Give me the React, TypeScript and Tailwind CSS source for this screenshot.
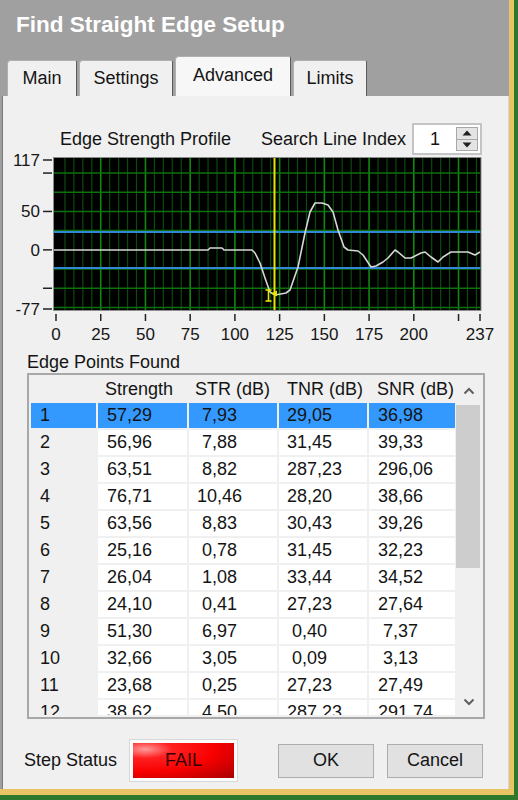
import React from 'react';

type Row = [string, string, string, string, string];

const rows: Row[] = [
  ['1', '57,29', '7,93', '29,05', '36,98'],
  ['2', '56,96', '7,88', '31,45', '39,33'],
  ['3', '63,51', '8,82', '287,23', '296,06'],
  ['4', '76,71', '10,46', '28,20', '38,66'],
  ['5', '63,56', '8,83', '30,43', '39,26'],
  ['6', '25,16', '0,78', '31,45', '32,23'],
  ['7', '26,04', '1,08', '33,44', '34,52'],
  ['8', '24,10', '0,41', '27,23', '27,64'],
  ['9', '51,30', '6,97', '0,40', '7,37'],
  ['10', '32,66', '3,05', '0,09', '3,13'],
  ['11', '23,68', '0,25', '27,23', '27,49'],
  ['12', '38,62', '4,50', '287,23', '291,74'],
];

// single digit values get a leading space, like the fixed width format of the original
const pad = (v: string) => (v.indexOf(',') === 1 ? ' ' + v : v);

const X = (v: number) => 56 + v * (424 / 237);
const Y = (v: number) => 160 + (117 - v) * (149 / 194);

const curve = [
  [54, 250], [208, 250], [210, 248], [222, 248], [224, 250], [252, 250], [255, 253], [260, 263],
  [265, 278], [270, 292], [275, 295], [286, 293], [290, 290], [298, 267], [305, 233], [310, 212],
  [315, 203], [322, 203], [328, 205], [333, 212], [338, 230], [344, 247], [348, 250], [358, 251],
  [363, 255], [371, 267], [376, 266], [383, 262], [388, 258], [395, 250], [398, 252], [405, 258],
  [411, 258], [421, 253], [425, 252], [431, 257], [438, 262], [443, 257], [451, 252], [468, 252],
  [475, 255], [480, 252],
];

const xTicks = [0, 25, 50, 75, 100, 125, 150, 175, 200, 225, 237];
const yTicks: [number, string][] = [
  [117, '117'],
  [100, ''],
  [50, '50'],
  [0, '0'],
  [-50, ''],
  [-77, '-77'],
];

const Chart = () => {
  const vLines: number[] = [];
  for (let v = 5; v < 237; v += 5) vLines.push(v);
  const hLines = [100, 75, 50, 25, -25, -50, -75];

  return (
    <svg width={506} height={196} viewBox="3 149 506 196" className="-mt-[6px] block shrink-0">
      <rect x={53.5} y={157.5} width={427.5} height={153} fill="#000" stroke="#8c8c8c" />
      {vLines.map((v) => (
        <line
          key={'v' + v}
          x1={X(v)}
          x2={X(v)}
          y1={158}
          y2={310}
          stroke={v % 25 === 0 ? '#0f8a0f' : '#0a4c0a'}
          strokeWidth={v % 25 === 0 ? 1.6 : 1.2}
        />
      ))}
      {hLines.map((v) => (
        <line
          key={'h' + v}
          x1={54}
          x2={480.5}
          y1={Y(v)}
          y2={Y(v)}
          stroke="#0c700c"
          strokeWidth={1.6}
        />
      ))}
      <line x1={54} x2={480.5} y1={232} y2={232} stroke="#3286d6" strokeWidth={2} />
      <line x1={54} x2={480.5} y1={268} y2={268} stroke="#3286d6" strokeWidth={2} />
      <polyline
        points={curve.map((p) => p.join(',')).join(' ')}
        fill="none"
        stroke="#d6d6d6"
        strokeWidth={1.6}
        strokeLinejoin="round"
      />
      <line x1={274.5} x2={274.5} y1={158} y2={310} stroke="#e6e600" strokeWidth={2} />
      <g stroke="#e6e600" strokeWidth={1.6} fill="none">
        <line x1={265.5} x2={271.5} y1={290} y2={290} />
        <line x1={268.5} x2={268.5} y1={290} y2={301} />
        <line x1={265.5} x2={271.5} y1={301} y2={301} />
      </g>
      <polygon points="271,293.5 277,290.5 277,296.5" fill="#e6e600" />

      {yTicks.map(([v, label]) => (
        <g key={'yt' + v}>
          <line x1={43} x2={52} y1={Y(v)} y2={Y(v)} stroke="#222" strokeWidth={1.5} />
          {label && (
            <text
              x={40}
              y={Y(v) + 6}
              textAnchor="end"
              fontSize={17}
              fontFamily="'Liberation Sans', Arial, sans-serif"
              fill="#161616"
            >
              {label}
            </text>
          )}
        </g>
      ))}
      {xTicks.map((v) => (
        <g key={'xt' + v}>
          <line x1={X(v)} x2={X(v)} y1={314} y2={321} stroke="#222" strokeWidth={1.5} />
          {v !== 225 && (
            <text
              x={X(v)}
              y={339.5}
              textAnchor="middle"
              fontSize={17}
              fontFamily="'Liberation Sans', Arial, sans-serif"
              fill="#161616"
            >
              {v}
            </text>
          )}
        </g>
      ))}
    </svg>
  );
};

const Tab = ({ label, active = false, w }: { label: string; active?: boolean; w: string }) => (
  <div
    className={`flex items-center justify-center rounded-tl-[4px] rounded-tr-[2px] border border-b-0 border-[#b0b0b0] border-r-[#5c5c5c] ${w} ${
      active ? 'h-[40px] bg-[#f7f7f7] pb-[2px]' : 'h-[36px] bg-[#f0f0f0]'
    }`}
  >
    {label}
  </div>
);

const Scrollbar = () => (
  <div className="flex h-full w-[25px] flex-col bg-[#f0f0f0]">
    <div className="flex h-[28px] items-center justify-center">
      <svg width={12} height={8} viewBox="0 0 12 8">
        <polyline points="1.5,6.5 6,2 10.5,6.5" fill="none" stroke="#606060" strokeWidth={2} />
      </svg>
    </div>
    <div className="h-[163px] w-[24px] bg-[#cdcdcd]" />
    <div className="flex-1" />
    <div className="flex h-[26px] items-center justify-center">
      <svg width={12} height={8} viewBox="0 0 12 8">
        <polyline points="1.5,1.5 6,6 10.5,1.5" fill="none" stroke="#606060" strokeWidth={2} />
      </svg>
    </div>
  </div>
);

const EdgeTable = () => (
  <div className="ml-[24px] flex h-[346px] w-[458px] shrink-0 gap-[1px] overflow-hidden border-2 border-[#a8a8a8] bg-[#f0f0f0] p-[2px]">
    <div className="flex w-[424px] flex-col gap-[2px] overflow-hidden">
      <div className="flex h-[24px] shrink-0 items-center gap-[2px]">
        <div className="w-[65px]" />
        <div className="w-[89px] pl-[7px]">Strength</div>
        <div className="w-[88px] pl-[6px]">STR (dB)</div>
        <div className="w-[88px] pl-[8px]">TNR (dB)</div>
        <div className="w-[86px] pl-[8px]">SNR (dB)</div>
      </div>
      {rows.map((r, i) => {
        const sel = i === 0;
        const cell = sel ? 'bg-[#3399ff]' : 'bg-white';
        return (
          <div key={r[0]} className="flex h-[25px] shrink-0 gap-[2px] whitespace-pre leading-[25px]">
            <div className={`w-[65px] pl-[9px] ${sel ? 'bg-[#3399ff]' : ''}`}>{r[0]}</div>
            <div className={`w-[89px] pl-[9px] ${cell}`}>{r[1]}</div>
            <div className={`w-[88px] pl-[8px] ${cell}`}>{pad(r[2])}</div>
            <div className={`w-[88px] pl-[8px] ${cell}`}>{pad(r[3])}</div>
            <div className={`w-[86px] pl-[9px] ${cell}`}>{pad(r[4])}</div>
          </div>
        );
      })}
    </div>
    <Scrollbar />
  </div>
);

const NumericBox = () => (
  <div className="flex h-[32px] w-[70px] items-center border-2 border-[#c4c4c4] bg-white">
    <span className="ml-[16px] w-[26px]">1</span>
    <div className="flex h-[24px] w-[22px] flex-col border border-[#a8a8a8]">
      <div className="flex flex-1 items-center justify-center border-b border-[#a8a8a8] bg-[#e4e4e4]">
        <svg width={10} height={6} viewBox="0 0 10 6">
          <polygon points="5,0.5 9.5,5.5 0.5,5.5" fill="#202020" />
        </svg>
      </div>
      <div className="flex flex-1 items-center justify-center bg-[#e4e4e4]">
        <svg width={10} height={6} viewBox="0 0 10 6">
          <polygon points="0.5,0.5 9.5,0.5 5,5.5" fill="#202020" />
        </svg>
      </div>
    </div>
  </div>
);

export default function App() {
  return (
    <div className="h-[800px] w-[518px] bg-[#2c782c] font-['Liberation_Sans',Arial,sans-serif] text-[18px] text-[#141414]">
      <div className="h-[795px] w-[514px] bg-[#e9c466]">
        <div className="flex h-[789px] w-[509px] flex-col bg-[#a0a0a0] pl-[2px]">
          {/* Title */}
          <div className="h-[56px] shrink-0 pl-[14px] pt-[14px] text-[22.5px] font-bold leading-[22px] text-white">
            Find Straight Edge Setup
          </div>

          {/* Tabs */}
          <div className="flex h-[40px] shrink-0 items-end gap-[2px] pl-[5px]">
            <Tab label="Main" w="w-[70px]" />
            <Tab label="Settings" w="w-[94px]" />
            <Tab label="Advanced" w="w-[116px]" active />
            <Tab label="Limits" w="w-[74px]" />
          </div>

          {/* Panel */}
          <div className="flex flex-1 flex-col border-l border-r border-l-[#7a7a7a] border-r-[#d6d6d6] bg-[#f0f0f0]">
            <div className="mt-[27px] flex h-[32px] shrink-0 items-center">
              <span className="ml-[57px] w-[201px]">Edge Strength Profile</span>
              <span className="w-[151px]">Search Line Index</span>
              <NumericBox />
            </div>

            <Chart />

            <div className="mt-[8px] h-[18px] shrink-0 pl-[24px] leading-[18px]">Edge Points Found</div>

            <div className="mt-[2px]">
              <EdgeTable />
            </div>

            <div className="mt-[20px] flex h-[43px] shrink-0 items-center">
              <span className="ml-[21px] w-[105px]">Step Status</span>
              <div className="h-[43px] w-[109px] border border-[#d8d8d8] bg-[#fbfbfb] p-[3px]">
                <div className="flex h-full items-center justify-center bg-[radial-gradient(ellipse_at_12%_18%,#ff9a9a_0%,#ff2020_22%,#f80000_55%,#a80000_100%)] text-[#300000]">
                  FAIL
                </div>
              </div>
              <button className="ml-[40px] h-[34px] w-[96px] border border-[#adadad] bg-[#e1e1e1]">OK</button>
              <button className="ml-[13px] h-[34px] w-[96px] border border-[#adadad] bg-[#e1e1e1]">Cancel</button>
            </div>
          </div>
        </div>
      </div>
    </div>
  );
}
